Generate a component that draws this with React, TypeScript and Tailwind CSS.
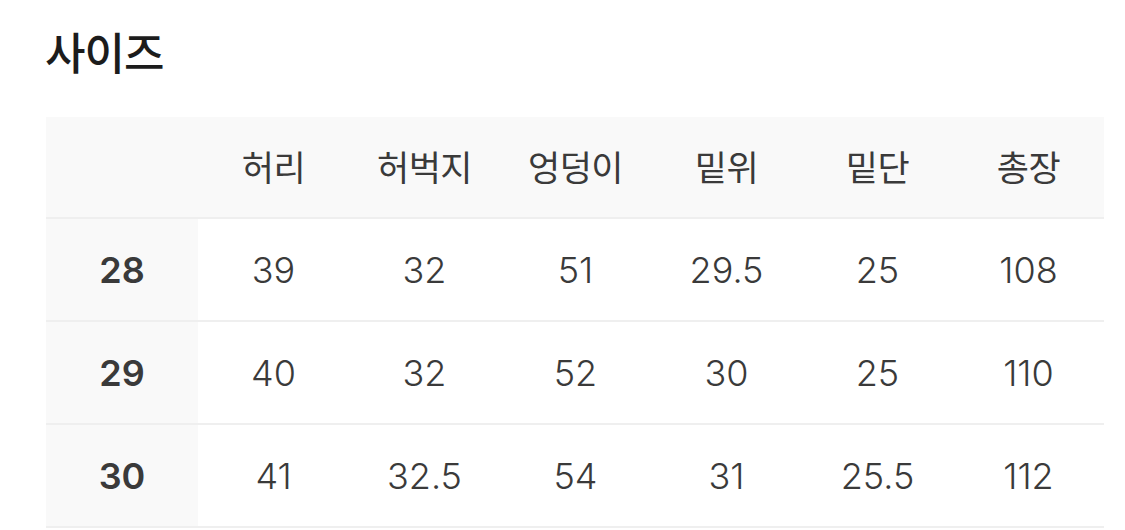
import React from 'react';

const headers = ['허리', '허벅지', '엉덩이', '밑위', '밑단', '총장'];

const rows: { size: string; values: string[] }[] = [
  { size: '28', values: ['39', '32', '51', '29.5', '25', '108'] },
  { size: '29', values: ['40', '32', '52', '30', '25', '110'] },
  { size: '30', values: ['41', '32.5', '54', '31', '25.5', '112'] },
];

const font = { fontFamily: "Inter, 'Noto Sans CJK KR', sans-serif" };

const App: React.FC = () => {
  return (
    <div className="w-[1125px] h-[530px] bg-white overflow-hidden pl-[45px] pt-[29px]" style={font}>
      <h2 className="text-[44px] leading-[50px] font-medium text-[#1c1c1c] tracking-[-1px]">사이즈</h2>

      <div className="mt-[38px] w-[1058px] ml-[1px]">
        {/* header */}
        <div className="grid grid-cols-[152px_repeat(6,151px)] h-[102px] bg-[#f9f9f9] border-b-2 border-[#efefef]">
          <div />
          {headers.map((h) => (
            <div key={h} className="flex items-center justify-center text-[35px] text-[#3a3a3a] tracking-[-0.5px] pt-[2px]">
              {h}
            </div>
          ))}
        </div>

        {rows.map((r) => (
          <div key={r.size} className="grid grid-cols-[152px_repeat(6,151px)] h-[103px] border-b-2 border-[#efefef]">
            <div className="flex items-center justify-center bg-[#f9f9f9] text-[36px] font-semibold text-[#3a3a3a]">
              {r.size}
            </div>
            {r.values.map((v, i) => (
              <div key={i} className="flex items-center justify-center text-[36px] font-light text-[#3a3a3a]">
                {v}
              </div>
            ))}
          </div>
        ))}
      </div>
    </div>
  );
};

export default App;
